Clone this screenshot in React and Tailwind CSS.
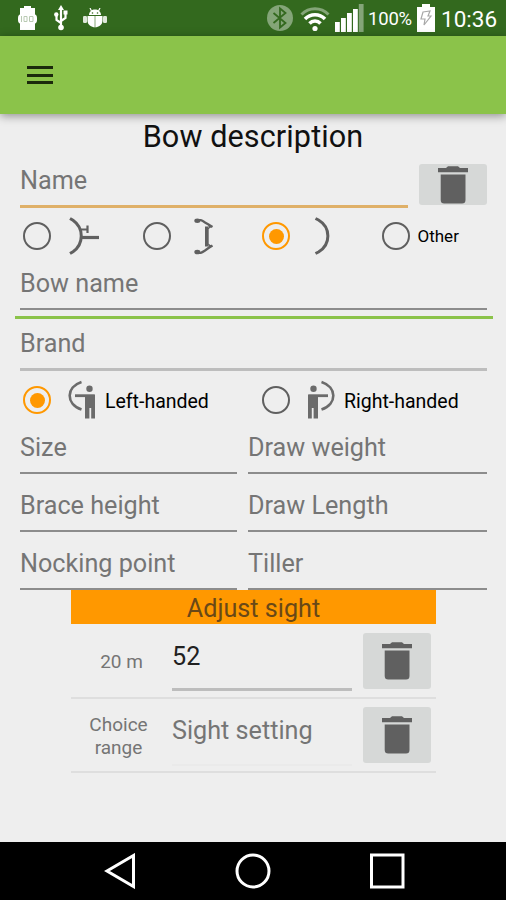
import { useState } from 'react';

const fieldClass = "text-[25.2px] leading-[33px] text-[#757575] whitespace-nowrap";

// --- Status bar icons ---
function StatusBar() {
  return (
    <div className="h-9 flex items-center bg-[#33691e] text-white">
      <svg className="ml-[18px]" width="19" height="26" viewBox="0 0 19 26">
        <path d="M6 1h7v2h4v22H2V3h4z" fill="#fff" />
        <rect x="0" y="9" width="19" height="10" rx="4" fill="#fff" />
        <path d="M3.500 11v6M6 11.500h3v5H6zM11.500 11.500h3.500v5h-3.500z" fill="none" stroke="#b9cab2" strokeWidth="1" />
      </svg>
      <svg className="ml-[17px]" width="14" height="26" viewBox="0 0 14 26">
        <path d="M7 4v18M7 18L2.500 15V9M7 16l4.500-3V8" fill="none" stroke="#fff" strokeWidth="2.200" />
        <path d="M7 0l3 5H4z" fill="#fff" />
        <circle cx="2.300" cy="9.500" r="2.200" fill="#fff" />
        <rect x="9.500" y="5.500" width="4" height="4" fill="#fff" />
        <circle cx="7" cy="22.500" r="2.800" fill="#fff" />
      </svg>
      <svg className="ml-[15px]" width="24" height="20" viewBox="0 0 24 20">
        <path d="M6 7C6 -.5 18 -.5 18 7z" fill="#fff" />
        <path d="M7 0l1.500 3M17 0l-1.500 3" stroke="#fff" strokeWidth="1.200" />
        <path d="M4.500 8h15v4.500c0 9-15 9-15 0z" fill="#fff" />
        <rect x="0" y="8" width="4" height="7" rx="1.200" fill="#dfe8da" />
        <rect x="20" y="8" width="4" height="7" rx="1.200" fill="#dfe8da" />
        <path d="M12 8v11" stroke="#86a678" strokeWidth="1" />
        <circle cx="9.500" cy="5" r=".8" fill="#33691e" />
        <circle cx="14.500" cy="5" r=".8" fill="#33691e" />
      </svg>

      <svg className="ml-auto" width="26" height="26" viewBox="0 0 26 26">
        <circle cx="13" cy="13" r="13" fill="#84a578" />
        <path d="M6.500 8l12 10L13 22.500v-19L18.500 8l-12 10" fill="none" stroke="#33691e" strokeWidth="1.800" />
      </svg>
      <svg className="ml-[7px] mt-0.5" width="30" height="26" viewBox="0 0 30 26" fill="none" strokeWidth="3">
        <path d="M1.500 8.500C9 .8 21 .8 28.500 8.500" stroke="#84a578" />
        <path d="M5 13c5.500-5.700 14.500-5.700 20 0" stroke="#fff" strokeWidth="3.500" />
        <path d="M9.500 17.500c3-3.200 8-3.200 11 0" stroke="#fff" strokeWidth="3.500" />
        <circle cx="15" cy="22.500" r="2.600" fill="#fff" />
      </svg>
      <svg className="ml-[5px]" width="29" height="28" viewBox="0 0 29 28" fill="#fff">
        <rect x="0" y="18" width="4.800" height="10" />
        <rect x="6" y="14" width="4.800" height="14" />
        <rect x="12" y="9" width="4.800" height="19" />
        <rect x="18" y="5" width="4.800" height="23" />
        <rect x="23.800" y="0" width="4.800" height="28" fill="#84a578" />
      </svg>
      <span className="ml-1 w-[45px] text-[18.5px] leading-6 pt-0.5 tracking-[-0.2px]">100%</span>
      <svg className="ml-[4px]" width="18" height="28" viewBox="0 0 18 28">
        <path d="M5 0h8v3h5v25H0V3h5z" fill="#fff" />
        <path d="M6 8l7-1-2 5h3l-7 9 1-6H4z" fill="#fff" stroke="#a8a8a8" strokeWidth="1.200" />
      </svg>
      <span className="ml-[6px] mr-[10px] w-[55px] text-[22.5px] leading-7 pt-0.5 whitespace-nowrap">10:36</span>
    </div>
  );
}

function Radio({ checked, onClick }) {
  return (
    <button onClick={onClick} className={`w-7 h-7 shrink-0 rounded-full border-[2.5px] flex items-center justify-center ${checked ? 'border-[#ff9800]' : 'border-[#5f5f5f]'}`}>
      {checked && <span className="w-[15px] h-[15px] rounded-full bg-[#ff9800]" />}
    </button>
  );
}

function TrashButton({ className }) {
  return (
    <button className={`w-[68px] shrink-0 rounded-[3px] bg-[#d6d8d7] flex items-center justify-center ${className}`}>
      <svg width="30" height="38" viewBox="0 0 30 38" fill="#606060">
        <path d="M8 2l2-1.800h10L22 2h8v4.300H0V2z" />
        <path d="M2.700 8.500h24.800V34a3.500 3.500 0 0 1-3.500 3.500H6.200A3.500 3.500 0 0 1 2.700 34z" />
      </svg>
    </button>
  );
}

// --- Bow type icons ---
const bowIcons = [
  <svg width="32" height="40" viewBox="0 0 32 40" fill="none" stroke="#606060">
    <path d="M2 2.500l3 1.800C16 12 16 28 5 35.700L2 37.500" strokeWidth="3" />
    <path d="M13 13.500h7M19.500 9.500v7.500" strokeWidth="2.200" />
    <path d="M13 21.500h18" strokeWidth="3.200" />
  </svg>,
  <svg width="32" height="40" viewBox="0 0 32 40" fill="none" stroke="#606060">
    <path d="M8 5c4-2 6-.5 9 1.500l3.500 2 4 2.500M8 36c4 2 6 .5 9-1.500l3.500-2.500 4-2.500" strokeWidth="2.300" />
    <ellipse cx="9.300" cy="4.800" rx="3" ry="2.200" fill="#606060" stroke="none" />
    <ellipse cx="9.300" cy="36" rx="3" ry="2.300" fill="#606060" stroke="none" />
    <path d="M20.500 8.500l3 2-4.500 3v14l4.500 2.500-3 2.500" fill="#606060" strokeWidth="1" />
    <path d="M18.700 10.500v20" strokeWidth="3.400" />
  </svg>,
  <svg width="32" height="40" viewBox="0 0 32 40" fill="none" stroke="#606060">
    <path d="M8.500 2.500l3 1.500C24 11.500 24 28.500 11.500 36l-3 1.500" strokeWidth="3" />
  </svg>,
];

function ArcherIcon({ flip }) {
  return (
    <svg className={flip ? '-scale-x-100' : ''} width="28" height="40" viewBox="0 0 28 40" fill="none" stroke="#6b6b6b">
      <path d="M13.500 2C-2 7-2.500 24 13.500 29.500" strokeWidth="2.600" />
      <path d="M7 15.700h19.800" strokeWidth="2.800" />
      <circle cx="21.500" cy="8.800" r="3.200" fill="#6b6b6b" stroke="none" />
      <path d="M17 15h10v23.500h-3.800V28h-1.800v10.500H17z" fill="#6b6b6b" stroke="none" />
    </svg>
  );
}

const measures = ['Size', 'Draw weight', 'Brace height', 'Draw Length', 'Nocking point', 'Tiller'];

export default function App() {
  const [bow, setBow] = useState(2);
  const [hand, setHand] = useState(0);

  return (
    <div className="w-full max-w-[506px] h-[900px] flex flex-col bg-[#eeeeee] font-['Roboto',sans-serif] overflow-hidden">
      <StatusBar />
      <header className="relative h-[78px] shrink-0 bg-[#8bc34a] flex items-center pl-[27px] shadow-[0_2px_9px_rgba(0,0,0,0.4)]">
        <button className="w-[26px] flex flex-col gap-[4.500px]">
          <span className="h-[3px] bg-[#1b2a0c]" />
          <span className="h-[3px] bg-[#1b2a0c]" />
          <span className="h-[3px] bg-[#1b2a0c]" />
        </button>
      </header>

      <main className="flex-1 flex flex-col">
        <h1 className="h-[45px] leading-[45px] text-center text-[30.6px] tracking-[0.1px] text-[#111]">Bow description</h1>

        <div className="mt-[5px] pl-5 pr-[19px] flex justify-between">
          <div className={`${fieldClass} w-[388px] h-11 border-b-[3px] border-[#dfb068]`}>Name</div>
          <TrashButton className="h-[41px]" />
        </div>

        {/* Bow type */}
        <div className="h-14 pl-[23px] flex items-center">
          {bowIcons.map((icon, i) => (
            <div key={i} className="w-[119.5px] flex items-center gap-[17px]">
              <Radio checked={bow === i} onClick={() => setBow(i)} />
              {icon}
            </div>
          ))}
          <div className="flex items-center gap-2">
            <Radio checked={bow === 3} onClick={() => setBow(3)} />
            <span className="pt-0.5 text-[17px] text-black">Other</span>
          </div>
        </div>

        <div className={`${fieldClass} ml-5 mr-[19px] h-[46px] pt-[3px] border-b-2 border-[#8c8c8c]`}>Bow name</div>
        <div className="mt-1.5 ml-[15px] mr-[13px] h-[3px] bg-[#8bc34a]" />
        <div className={`${fieldClass} ml-5 mr-[19px] h-[52px] pt-2 border-b-[3px] border-[#bdbdbd]`}>Brand</div>

        {/* Handedness */}
        <div className="h-[58px] pl-[23px] flex items-center text-[19.5px] text-black">
          {['Left-handed', 'Right-handed'].map((label, i) => (
            <div key={label} className="w-[239px] flex items-center">
              <Radio checked={hand === i} onClick={() => setHand(i)} />
              <div className="ml-[17px] w-[37px]"><ArcherIcon flip={i === 1} /></div>
              <span className="pt-[3px]">{label}</span>
            </div>
          ))}
        </div>

        <div className="ml-5 mr-[19px] -mt-[13px] grid grid-cols-[217px_239px] gap-x-[11px]">
          {measures.map(label => (
            <div key={label} className={`${fieldClass} h-[58px] pt-[15px] border-b-2 border-[#8c8c8c]`}>{label}</div>
          ))}
        </div>

        {/* Sight settings */}
        <section className="w-[365px] ml-[71px]">
          <h2 className="h-[34px] leading-[37px] text-center text-[25.2px] bg-[#ff9800] text-[#694817]">Adjust sight</h2>
          <div className="h-[75px] pr-[5px] border-b-2 border-[#dedede] flex">
            <div className="w-[101px] pt-[26px] text-center text-[19px] leading-6 text-[#757575]">20 m</div>
            <div className="w-[180px] h-[67px] pt-4 border-b-[3px] border-[#bdbdbd] text-[25.2px] leading-[33px] text-[#212121]">52</div>
            <TrashButton className="ml-auto mt-[9px] h-14" />
          </div>
          <div className="h-[74px] pr-[5px] border-b-2 border-[#dedede] flex">
            <div className="w-[95px] pt-[14px] text-center text-[19px] leading-[23px] text-[#757575]">Choice<br />range</div>
            <div className={`${fieldClass} ml-1.5 w-[180px] h-[67px] pt-[15px] border-b-2 border-[#eaeaea]`}>Sight setting</div>
            <TrashButton className="ml-auto mt-2 h-14" />
          </div>
        </section>
      </main>

      <nav className="h-[58px] shrink-0 bg-black flex justify-between items-center pl-[104px] pr-[101px]">
        <svg width="32" height="36" viewBox="0 0 32 36" fill="none" stroke="#fff" strokeWidth="3">
          <path d="M29.500 2.500v31L3 18z" />
        </svg>
        <svg width="36" height="36" viewBox="0 0 36 36" fill="none" stroke="#fff" strokeWidth="3">
          <circle cx="18" cy="18" r="16" />
        </svg>
        <svg width="36" height="36" viewBox="0 0 36 36" fill="none" stroke="#fff" strokeWidth="3">
          <rect x="2.500" y="2" width="31.500" height="32" />
        </svg>
      </nav>
    </div>
  );
}
